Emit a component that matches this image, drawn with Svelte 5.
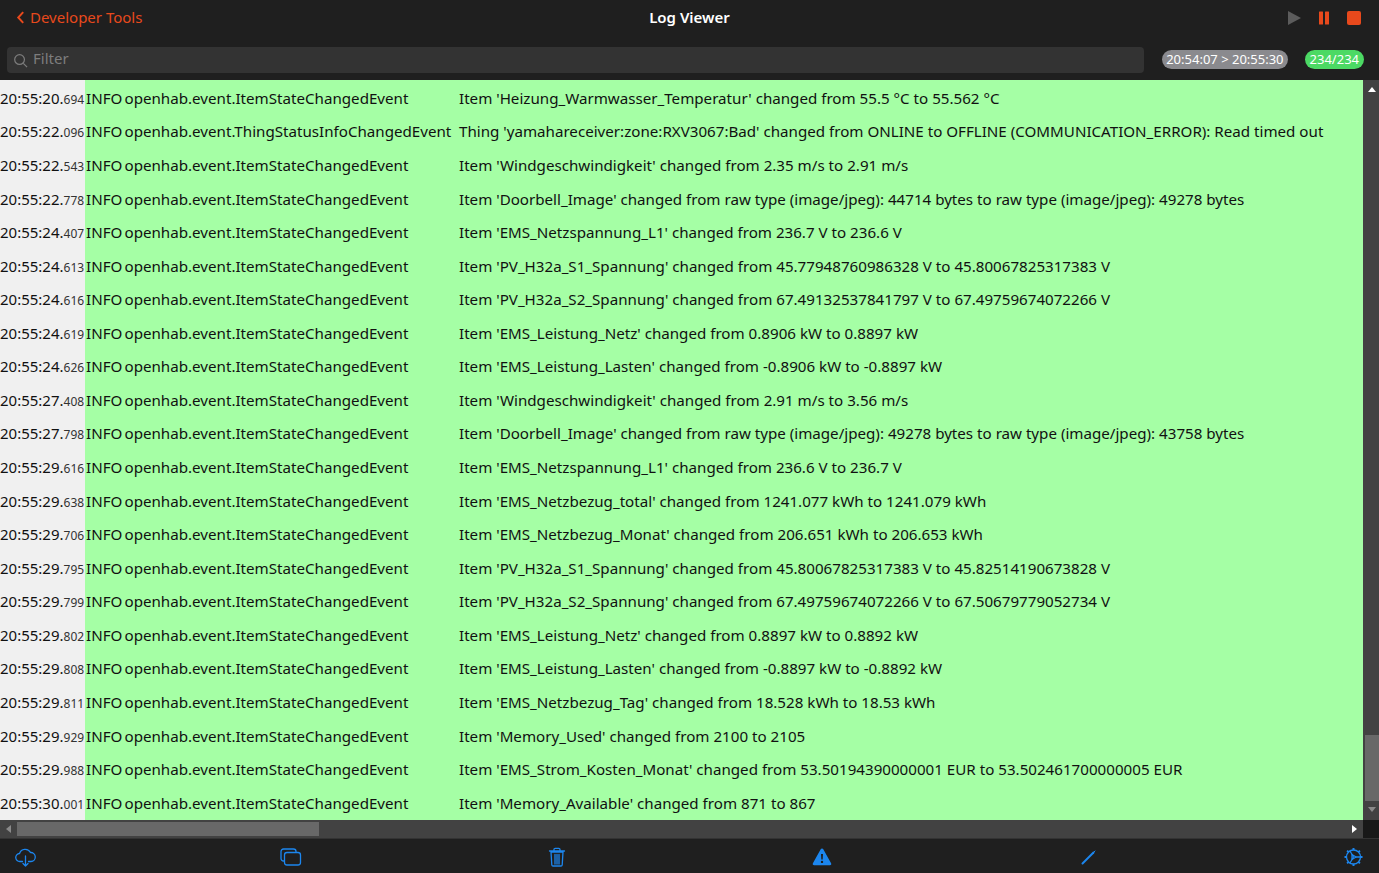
<script>
  const logs = [
    ['20:55:20', '694', 'openhab.event.ItemStateChangedEvent', "Item 'Heizung_Warmwasser_Temperatur' changed from 55.5 °C to 55.562 °C"],
    ['20:55:22', '096', 'openhab.event.ThingStatusInfoChangedEvent', "Thing 'yamahareceiver:zone:RXV3067:Bad' changed from ONLINE to OFFLINE (COMMUNICATION_ERROR): Read timed out"],
    ['20:55:22', '543', 'openhab.event.ItemStateChangedEvent', "Item 'Windgeschwindigkeit' changed from 2.35 m/s to 2.91 m/s"],
    ['20:55:22', '778', 'openhab.event.ItemStateChangedEvent', "Item 'Doorbell_Image' changed from raw type (image/jpeg): 44714 bytes to raw type (image/jpeg): 49278 bytes"],
    ['20:55:24', '407', 'openhab.event.ItemStateChangedEvent', "Item 'EMS_Netzspannung_L1' changed from 236.7 V to 236.6 V"],
    ['20:55:24', '613', 'openhab.event.ItemStateChangedEvent', "Item 'PV_H32a_S1_Spannung' changed from 45.77948760986328 V to 45.80067825317383 V"],
    ['20:55:24', '616', 'openhab.event.ItemStateChangedEvent', "Item 'PV_H32a_S2_Spannung' changed from 67.49132537841797 V to 67.49759674072266 V"],
    ['20:55:24', '619', 'openhab.event.ItemStateChangedEvent', "Item 'EMS_Leistung_Netz' changed from 0.8906 kW to 0.8897 kW"],
    ['20:55:24', '626', 'openhab.event.ItemStateChangedEvent', "Item 'EMS_Leistung_Lasten' changed from -0.8906 kW to -0.8897 kW"],
    ['20:55:27', '408', 'openhab.event.ItemStateChangedEvent', "Item 'Windgeschwindigkeit' changed from 2.91 m/s to 3.56 m/s"],
    ['20:55:27', '798', 'openhab.event.ItemStateChangedEvent', "Item 'Doorbell_Image' changed from raw type (image/jpeg): 49278 bytes to raw type (image/jpeg): 43758 bytes"],
    ['20:55:29', '616', 'openhab.event.ItemStateChangedEvent', "Item 'EMS_Netzspannung_L1' changed from 236.6 V to 236.7 V"],
    ['20:55:29', '638', 'openhab.event.ItemStateChangedEvent', "Item 'EMS_Netzbezug_total' changed from 1241.077 kWh to 1241.079 kWh"],
    ['20:55:29', '706', 'openhab.event.ItemStateChangedEvent', "Item 'EMS_Netzbezug_Monat' changed from 206.651 kWh to 206.653 kWh"],
    ['20:55:29', '795', 'openhab.event.ItemStateChangedEvent', "Item 'PV_H32a_S1_Spannung' changed from 45.80067825317383 V to 45.82514190673828 V"],
    ['20:55:29', '799', 'openhab.event.ItemStateChangedEvent', "Item 'PV_H32a_S2_Spannung' changed from 67.49759674072266 V to 67.50679779052734 V"],
    ['20:55:29', '802', 'openhab.event.ItemStateChangedEvent', "Item 'EMS_Leistung_Netz' changed from 0.8897 kW to 0.8892 kW"],
    ['20:55:29', '808', 'openhab.event.ItemStateChangedEvent', "Item 'EMS_Leistung_Lasten' changed from -0.8897 kW to -0.8892 kW"],
    ['20:55:29', '811', 'openhab.event.ItemStateChangedEvent', "Item 'EMS_Netzbezug_Tag' changed from 18.528 kWh to 18.53 kWh"],
    ['20:55:29', '929', 'openhab.event.ItemStateChangedEvent', "Item 'Memory_Used' changed from 2100 to 2105"],
    ['20:55:29', '988', 'openhab.event.ItemStateChangedEvent', "Item 'EMS_Strom_Kosten_Monat' changed from 53.50194390000001 EUR to 53.502461700000005 EUR"],
    ['20:55:30', '001', 'openhab.event.ItemStateChangedEvent', "Item 'Memory_Available' changed from 871 to 867"]
  ];
</script>

<div class="page">
  <header class="navbar">
    <div class="nav-row">
      <a class="back" href="#back">
        <svg class="chevron" viewBox="0 0 10 16"><path d="M8 2 2.5 8 8 14" /></svg>
        <span>Developer Tools</span>
      </a>
      <div class="title">Log Viewer</div>
      <div class="controls">
        <svg viewBox="0 0 14 14" class="play"><path d="M1 0 14 7 1 14z" /></svg>
        <svg viewBox="0 0 14 14" class="pause"><rect x="2" y="0.5" width="4" height="13" rx="0.5" /><rect x="8" y="0.5" width="4" height="13" rx="0.5" /></svg>
        <svg viewBox="0 0 14 14" class="stop"><rect x="0" y="0" width="14" height="14" rx="2" /></svg>
      </div>
    </div>
    <div class="filter-row">
      <div class="filter">
        <svg viewBox="0 0 16 16"><circle cx="7" cy="7" r="5.2" /><path d="m11 11 4 4" /></svg>
        <span>Filter</span>
      </div>
      <span class="pill range">20:54:07 &gt; 20:55:30</span>
      <span class="pill count">234/234</span>
    </div>
  </header>

  <div class="body">
    <main class="log">
      {#each logs as [time, ms, logger, message]}
        <div class="row">
          <div class="time">{time}.<small>{ms}</small></div>
          <div class="level">INFO</div>
          <div class="logger">{logger}</div>
          <div class="message">{message}</div>
        </div>
      {/each}
    </main>
    <div class="vscroll">
      <svg class="arrow" viewBox="0 0 8 5"><path d="M0 5 4 0l4 5z" /></svg>
      <div class="vthumb"></div>
      <svg class="arrow down" viewBox="0 0 8 5"><path d="M0 0h8L4 5z" /></svg>
    </div>
  </div>

  <div class="hscroll">
    <div class="htrack">
      <svg class="harrow dim" viewBox="0 0 5 8"><path d="M5 0v8L0 4z" /></svg>
      <div class="hthumb"></div>
      <svg class="harrow" viewBox="0 0 5 8"><path d="M0 0v8l5-4z" /></svg>
    </div>
    <div class="corner"></div>
  </div>

  <footer class="toolbar">
    <svg viewBox="0 0 22 20"><path d="M7.500 14.500H5a4 4 0 0 1-.5-8A6 6 0 0 1 15.500 5.500a4.500 4.500 0 0 1 .5 9h-2.500" /><path d="M10.500 9v10M8 16.500l2.500 2.500 2.500-2.500" /></svg>
    <svg viewBox="0 0 22 20"><rect x="1" y="2" width="15" height="12" rx="2.5" /><rect x="4.5" y="5.5" width="16" height="12.5" rx="2.5" class="over" /></svg>
    <svg viewBox="0 0 22 20"><path d="M5 5h12l-.8 13a1.2 1.2 0 0 1-1.2 1H7a1.2 1.2 0 0 1-1.2-1zM3.500 4h15M8 4V2.500A1.200 1.200 0 0 1 9.200 1.300h3.600A1.200 1.200 0 0 1 14 2.500V4M9 7.500V17M11 7.500V17M13 7.500V17" /></svg>
    <svg viewBox="0 0 22 20" class="solid"><path fill-rule="evenodd" d="M11 1.500c.6 0 1 .3 1.300.8l7.800 14c.5 1-.1 2-1.200 2H3.100c-1.100 0-1.700-1-1.200-2l7.800-14c.3-.5.700-.8 1.300-.8zM10 7l.3 5.500h1.400L12 7zm1 6.700a1.200 1.200 0 1 0 0 2.400 1.200 1.200 0 0 0 0-2.400z" /></svg>
    <svg viewBox="0 0 22 20" class="pen"><path d="M5.500 16.500 16.500 5.500" /><path class="tip" d="M16.500 5.500 18 4" /></svg>
    <svg viewBox="0 0 22 20" class="gear"><circle cx="11.500" cy="10" r="7" /><path d="M11.500 10 8 4M11.500 10 8 16M13.500 10h5" /><path d="M10 7.500 14 10l-4 2.500z" /><path class="teeth" d="M11.500 1v2M11.500 17v2M2.500 10h2M18.500 10h2M5.100 3.600l1.500 1.500M16.400 14.900l1.500 1.500M5.100 16.400l1.500-1.500M16.400 5.100l1.500-1.500" /></svg>
  </footer>
</div>

<style>
  :global(body) {
    margin: 0;
    background: #1f1f1f;
  }

  .page {
    width: 1379px;
    height: 873px;
    display: flex;
    flex-direction: column;
    overflow: hidden;
    font-family: "Noto Sans", sans-serif;
  }

  .navbar {
    height: 80px;
    flex: none;
    background: #1f1f1f;
    box-sizing: border-box;
  }

  .nav-row {
    height: 34px;
    display: flex;
    align-items: center;
    justify-content: space-between;
    position: relative;
    padding: 0 18px 0 16px;
  }

  .back {
    display: flex;
    align-items: center;
    gap: 5px;
    color: #e8491c;
    text-decoration: none;
    font-size: 15px;
  }

  .chevron {
    width: 9px;
    height: 15px;
    fill: none;
    stroke: #e8491c;
    stroke-width: 2.2;
  }

  .title {
    position: absolute;
    left: 0;
    right: 0;
    text-align: center;
    color: #fff;
    font-size: 15px;
    font-weight: 600;
  }

  .controls {
    display: flex;
    align-items: center;
    gap: 16px;
    padding-top: 2px;
  }

  .controls svg {
    width: 14px;
    height: 14px;
  }

  .play {
    fill: #5c5c5c;
  }

  .pause,
  .stop {
    fill: #e8491c;
  }

  .filter-row {
    display: flex;
    align-items: center;
    height: 26px;
    margin-top: 13px;
    padding: 0 15px 0 7px;
  }

  .filter {
    flex: 1;
    height: 26px;
    display: flex;
    align-items: center;
    gap: 5px;
    padding-left: 6px;
    border-radius: 4px;
    background: #333333;
    color: #7d7d7d;
    font-size: 15px;
    margin-right: 18px;
  }

  .filter span {
    margin-top: -4px;
  }

  .filter svg {
    width: 15px;
    height: 15px;
    fill: none;
    stroke: #7d7d7d;
    stroke-width: 1.300;
  }

  .pill {
    height: 19px;
    line-height: 19px;
    margin-top: -1px;
    border-radius: 10px;
    color: #fff;
    font-size: 13px;
    padding: 0 4px;
  }

  .range {
    background: #8a8a8e;
    margin-right: 17px;
  }

  .count {
    background: #4cd964;
    padding: 0 5px;
  }

  .body {
    flex: 1;
    min-height: 0;
    display: flex;
  }

  .log {
    flex: 1;
    min-width: 0;
    display: flex;
    flex-direction: column;
    justify-content: flex-end;
    overflow: hidden;
    padding-bottom: 0.6px;
    background: linear-gradient(90deg, #f0f0f0 85px, #a5ffa5 85px);
    color: #111;
    font-size: 15.15px;
  }

  .row {
    flex: none;
    height: 33.57px;
    display: flex;
    align-items: center;
    white-space: nowrap;
  }

  .time {
    width: 85px;
    flex: none;
    font-size: 15px;
  }

  .time small {
    font-size: 12px;
    color: #333;
  }

  .level {
    width: 39.5px;
    flex: none;
    padding-left: 1px;
    box-sizing: border-box;
  }

  .logger {
    width: 334.5px;
    flex: none;
  }

  .vscroll {
    width: 16px;
    flex: none;
    box-sizing: border-box;
    padding-left: 2px;
    display: flex;
    flex-direction: column;
    align-items: center;
    background: #424242;
  }

  .arrow {
    width: 8px;
    height: 5px;
    margin: 7px 0 0;
    fill: #fff;
    flex: none;
  }

  .arrow.down {
    margin: 6px 0 8px;
    fill: #8a8a8a;
  }

  .vthumb {
    width: 14px;
    margin-top: auto;
    height: 66px;
    background: #686868;
  }

  .hscroll {
    height: 18px;
    flex: none;
    display: flex;
    border-bottom: 1px solid #333;
  }

  .htrack {
    flex: 1;
    display: flex;
    align-items: center;
    background: #424242;
    padding: 0 6px 0 6px;
  }

  .harrow {
    width: 5px;
    height: 8px;
    fill: #fff;
    flex: none;
  }

  .harrow.dim {
    fill: #8a8a8a;
  }

  .hthumb {
    width: 302px;
    height: 14px;
    margin-left: 6px;
    margin-right: auto;
    background: #686868;
  }

  .corner {
    width: 16px;
    background: #181818;
  }

  .toolbar {
    height: 34px;
    flex: none;
    box-sizing: border-box;
    padding: 2px 15px 0;
    display: flex;
    align-items: center;
    justify-content: space-between;
    background: #1f1f1f;
  }

  .toolbar svg {
    width: 22px;
    height: 20px;
    fill: none;
    stroke: #1c86ee;
    stroke-width: 1.300;
    stroke-linecap: round;
    stroke-linejoin: round;
  }

  .toolbar .over {
    fill: #1f1f1f;
  }

  .toolbar .solid {
    fill: #1c86ee;
    stroke: none;
  }

  .toolbar .pen {
    stroke-width: 2;
  }

  .toolbar .pen .tip {
    stroke-width: 1;
  }

  .toolbar .gear .teeth {
    stroke-width: 2;
    stroke-linecap: butt;
  }
</style>
